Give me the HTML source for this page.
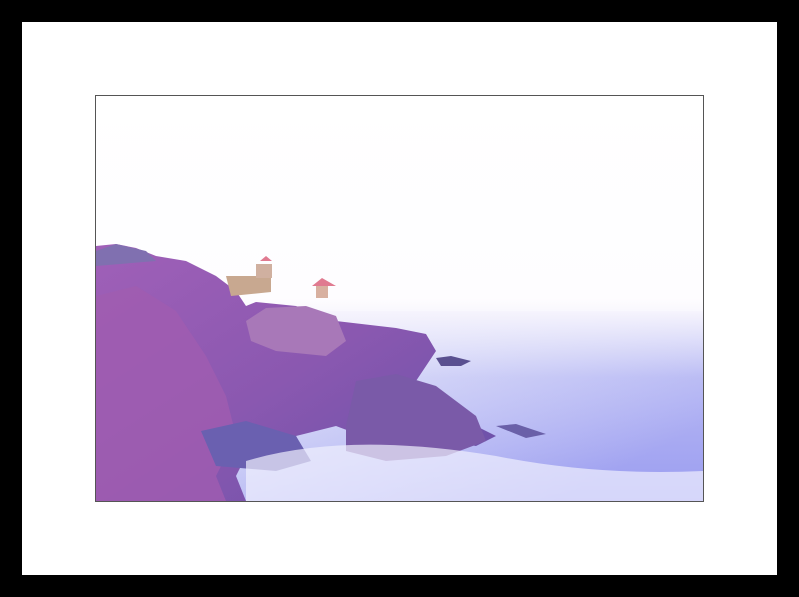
<!DOCTYPE html>
<html><head><style>
html,body{margin:0;padding:0;width:799px;height:597px;overflow:hidden;background:#000}
.mat{position:absolute;left:22px;top:22px;width:755px;height:553px;background:#fff}
.ph{position:absolute;left:96px;top:96px;width:607px;height:405px;outline:1px solid #555}
</style></head><body>
<div class="mat"></div>
<svg class="ph" width="607" height="405" viewBox="0 0 607 405">
<defs>
<linearGradient id="sky" x1="0" y1="0" x2="0" y2="1">
<stop offset="0" stop-color="#fff"/><stop offset="0.5" stop-color="#fefdff"/><stop offset="0.58" stop-color="#f0f0fc"/><stop offset="1" stop-color="#d8d8f8"/>
</linearGradient>
<linearGradient id="sea" x1="0" y1="0" x2="1" y2="0.6">
<stop offset="0" stop-color="#e8e8fb"/><stop offset="0.5" stop-color="#c8caf6"/><stop offset="1" stop-color="#9a9cf0"/>
</linearGradient>
<linearGradient id="fade" x1="0" y1="0" x2="0" y2="1">
<stop offset="0" stop-color="#f6f4fd" stop-opacity="1"/><stop offset="0.35" stop-color="#f0f0fc" stop-opacity="0.3"/><stop offset="1" stop-color="#fff" stop-opacity="0"/>
</linearGradient>
<linearGradient id="rock" x1="0" y1="0" x2="1" y2="1">
<stop offset="0" stop-color="#a060b8"/><stop offset="0.5" stop-color="#8a58b0"/><stop offset="1" stop-color="#6650a8"/>
</linearGradient>
</defs>
<rect width="607" height="405" fill="url(#sky)"/>
<rect y="215" width="607" height="190" fill="url(#sea)"/>
<rect y="215" width="607" height="190" fill="url(#fade)"/>
<path d="M0 150 L20 148 L40 152 L60 160 L90 165 L120 180 L140 195 L150 210 L160 206 L200 210 L240 225 L300 232 L330 238 L340 255 L330 270 L310 300 L340 320 L380 330 L400 340 L380 350 L320 340 L280 345 L240 330 L200 340 L210 360 L190 370 L150 360 L140 380 L150 405 L0 405Z" fill="url(#rock)"/>
<path d="M250 330 L260 285 L300 278 L340 290 L380 320 L390 345 L350 360 L290 365 L250 355Z" fill="#7a5aa8"/>
<path d="M150 225 L170 212 L210 210 L240 220 L250 245 L230 260 L180 255 L155 245Z" fill="#a878b8"/>
<path d="M0 200 L40 190 L80 215 L110 260 L130 300 L140 340 L120 380 L130 405 L0 405Z" fill="#a05cb0" opacity="0.8"/>
<path d="M105 335 L150 325 L200 340 L215 365 L180 375 L120 370Z" fill="#6a60b0"/>
<path d="M340 262 L355 260 L375 265 L365 270 L345 270Z" fill="#5a5090"/>
<path d="M400 330 L420 328 L450 338 L430 342Z" fill="#6a60a8"/>
<path d="M130 180 L175 180 L175 196 L135 200Z" fill="#c8a890"/>
<rect x="160" y="168" width="16" height="14" fill="#d0b0a0"/>
<path d="M164 165 L170 160 L176 165Z" fill="#e07a90"/>
<rect x="220" y="190" width="12" height="12" fill="#d8b0a0"/>
<path d="M216 190 L226 182 L240 190Z" fill="#e07a90"/>
<path d="M0 155 L20 148 L50 155 L60 165 L0 170Z" fill="#8070b0"/>
<path d="M150 365 Q250 335 400 360 Q500 380 607 375 L607 405 L150 405Z" fill="#f0f0fd" opacity="0.7"/>
</svg>
</body></html>
